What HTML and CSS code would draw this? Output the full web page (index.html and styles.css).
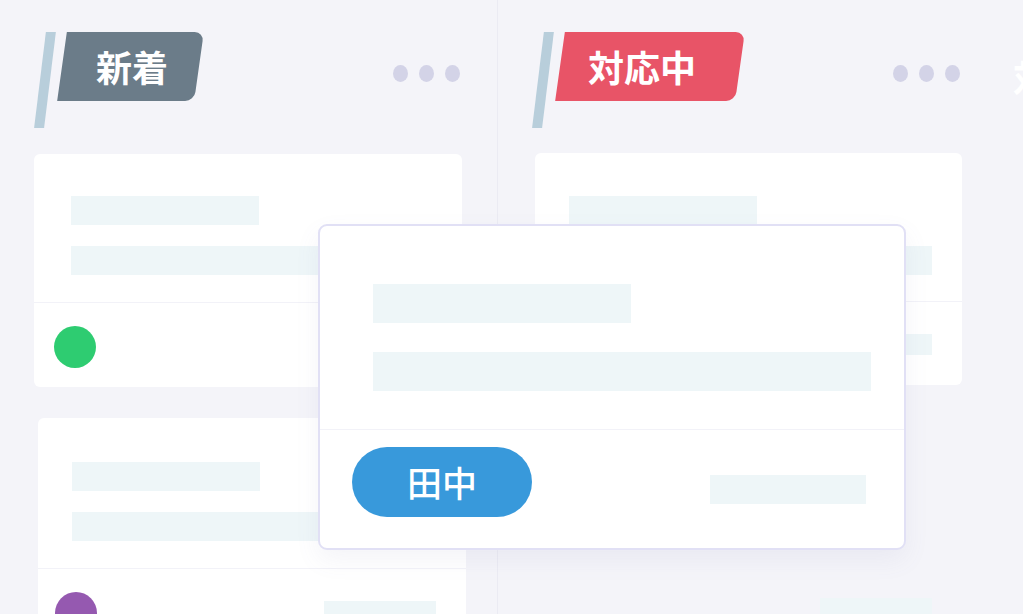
FILE: index.html
```html
<!DOCTYPE html>
<html>
<head>
  <title>Board</title>
  <link rel="stylesheet" href="styles.css">
</head>
<body>
  <div class="board">
    <section class="column col-one">
      <header class="col-head">
        <span class="stripe"></span>
        <span class="badge badge-new">新着</span>
        <span class="dots"><i></i><i></i><i></i></span>
      </header>
      <div class="card card-one">
        <div class="card-body">
          <div class="bar bar-short"></div>
          <div class="bar bar-long"></div>
        </div>
        <div class="card-foot">
          <span class="avatar green"></span>
          <span class="bar bar-foot"></span>
        </div>
      </div>
      <div class="card card-two">
        <div class="card-body">
          <div class="bar bar-short"></div>
          <div class="bar bar-long"></div>
        </div>
        <div class="card-foot">
          <span class="avatar purple"></span>
          <span class="bar bar-foot"></span>
        </div>
      </div>
    </section>

    <section class="column col-two">
      <header class="col-head">
        <span class="stripe"></span>
        <span class="badge badge-doing">対応中</span>
        <span class="dots"><i></i><i></i><i></i></span>
      </header>
      <div class="card card-three">
        <div class="card-body">
          <div class="bar bar-short"></div>
          <div class="bar bar-long"></div>
        </div>
        <div class="card-foot">
          <span class="avatar blue"></span>
          <span class="bar bar-foot"></span>
        </div>
      </div>
      <!-- slot left by the card being dragged -->
      <div class="card card-ghost">
        <div class="card-body"></div>
        <div class="card-foot">
          <span class="bar bar-foot"></span>
        </div>
      </div>
    </section>

    <section class="column col-three">
      <header class="col-head">
        <span class="peek">対</span>
      </header>
    </section>

    <div class="drag-card">
      <div class="drag-body">
        <div class="bar drag-short"></div>
        <div class="bar drag-long"></div>
      </div>
      <div class="drag-foot">
        <span class="pill">田中</span>
        <span class="bar drag-bar"></span>
      </div>
    </div>
  </div>
</body>
</html>
```

FILE: styles.css
```css
body {
  margin: 0;
  background: #f4f4f9;
  font-family: "Noto Sans CJK JP", "Noto Sans", sans-serif;
}

.board {
  position: relative;
  display: flex;
  width: 1023px;
  height: 614px;
  overflow: hidden;
}

.column {
  flex: none;
  width: 497px;
}

.col-one {
  border-right: 1px solid #ebebf3;
}

.col-three {
  width: 60px;
}

.col-head {
  display: flex;
  align-items: flex-start;
  height: 96px;
  margin-top: 32px;
  padding-left: 40px;
}

.stripe {
  width: 10px;
  height: 96px;
  background: #b8cedb;
  transform: skewX(-7deg);
}

.badge {
  position: relative;
  isolation: isolate;
  box-sizing: border-box;
  margin-left: 12px;
  height: 69px;
  line-height: 69px;
  padding-left: 34px;
  font-size: 36px;
  font-weight: 700;
  color: #fff;
}

.badge::before {
  content: "";
  position: absolute;
  inset: 0;
  z-index: -1;
  border-radius: 0 9px 9px 0;
  transform: skewX(-8deg);
}

.badge-new {
  width: 137px;
}

.badge-new::before {
  background: #6b7c89;
}

.badge-doing {
  width: 180px;
  padding-left: 28px;
}

.badge-doing::before {
  background: #e85467;
}

.dots {
  display: flex;
  gap: 11px;
  margin-left: auto;
  margin-right: 37px;
  margin-top: 33px;
}

.col-two .dots {
  margin-right: 35px;
}

.dots i {
  width: 15px;
  height: 17px;
  border-radius: 50%;
  background: #d3d3e7;
}

.peek {
  margin-left: -22px;
  margin-top: 18px;
  font-size: 36px;
  font-weight: 700;
  color: #fff;
}

.card {
  width: 428px;
  background: #fff;
  border-radius: 6px;
}

.card-one {
  margin: 26px 0 0 34px;
}

.card-two {
  margin: 31px 0 0 38px;
}

.card-three {
  width: 427px;
  margin: 25px 0 0 37px;
  height: 232px;
}

.card-ghost {
  width: 427px;
  margin: 32px 0 0 37px;
  background: transparent;
}

.card-body {
  box-sizing: border-box;
  height: 149px;
  padding: 42px 30px 0 37px;
  border-bottom: 1px solid #f2f2f8;
}

.card-two .card-body {
  height: 151px;
  padding: 44px 30px 0 34px;
}

.card-three .card-body {
  padding: 43px 30px 0 34px;
}

.card-ghost .card-body {
  border-bottom: none;
}

.card-foot {
  display: flex;
  align-items: center;
  height: 84px;
  padding: 0 30px 0 20px;
}

.card-two .card-foot {
  padding-left: 17px;
}

.bar {
  background: #eef6f8;
}

.bar-short {
  width: 188px;
  height: 29px;
}

.bar-long {
  height: 29px;
  margin-top: 21px;
}

.bar-foot {
  width: 112px;
  height: 21px;
  margin-left: auto;
}

.avatar {
  width: 42px;
  height: 42px;
  margin-top: 4px;
  border-radius: 50%;
}

.green {
  background: #2ecc71;
}

.purple {
  background: #9559b0;
}

.blue {
  background: #3899db;
}

.drag-card {
  position: absolute;
  left: 318px;
  top: 224px;
  box-sizing: border-box;
  width: 588px;
  height: 326px;
  background: #fff;
  border: 2px solid #e1e0f5;
  border-radius: 9px;
  box-shadow: 0 10px 24px rgba(110, 110, 170, 0.08);
}

.drag-body {
  box-sizing: border-box;
  height: 204px;
  padding: 58px 33px 0 53px;
  border-bottom: 1px solid #f2f2f8;
}

.drag-short {
  width: 258px;
  height: 39px;
}

.drag-long {
  height: 39px;
  margin-top: 29px;
}

.drag-foot {
  display: flex;
  align-items: center;
  padding: 17px 38px 0 32px;
}

.pill {
  width: 180px;
  height: 70px;
  line-height: 70px;
  border-radius: 35px;
  background: #3899db;
  color: #fff;
  text-align: center;
  font-size: 35px;
  font-weight: 500;
}

.drag-bar {
  width: 156px;
  height: 29px;
  margin-left: auto;
  margin-top: 14px;
}
```
